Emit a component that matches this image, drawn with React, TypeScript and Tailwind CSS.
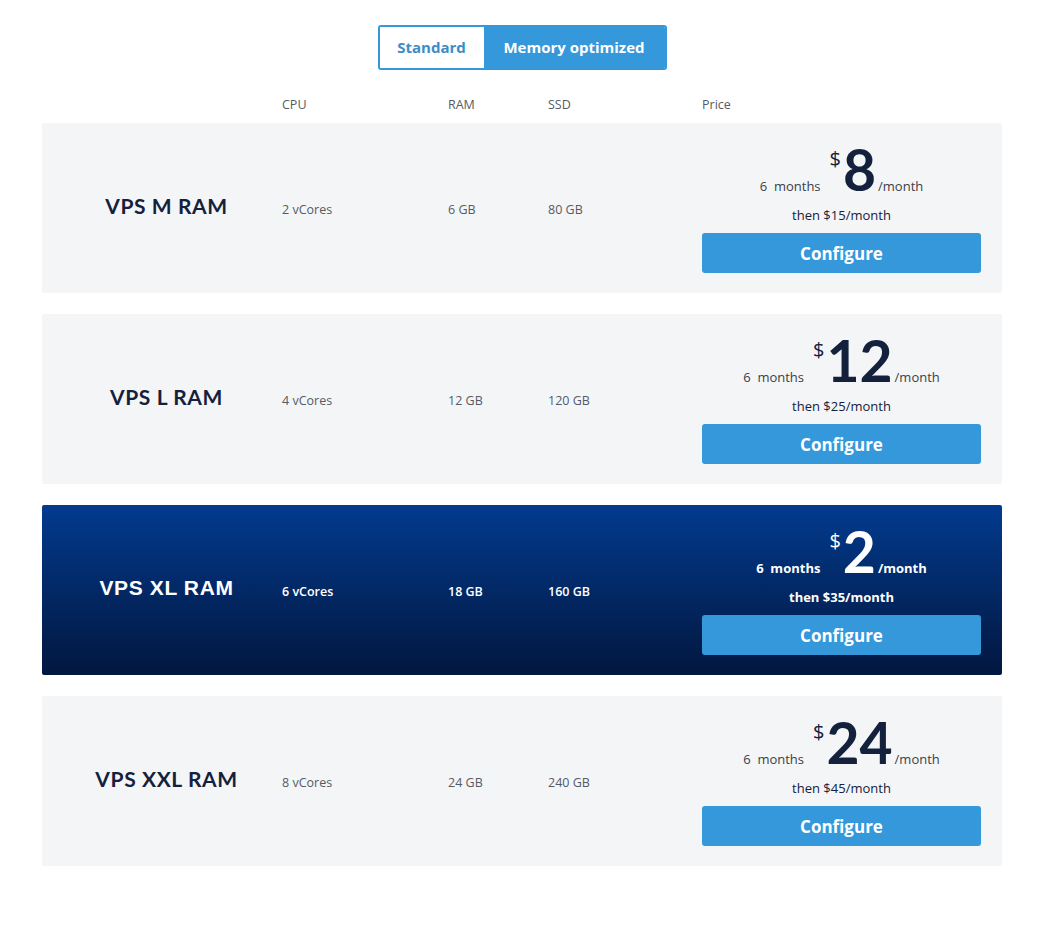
import React from "react";

type Plan = {
  name: string;
  cpu: string;
  ram: string;
  ssd: string;
  price: string;
  then: string;
  featured?: boolean;
};

const plans: Plan[] = [
  { name: "VPS M RAM", cpu: "2 vCores", ram: "6 GB", ssd: "80 GB", price: "8", then: "then $15/month" },
  { name: "VPS L RAM", cpu: "4 vCores", ram: "12 GB", ssd: "120 GB", price: "12", then: "then $25/month" },
  { name: "VPS XL RAM", cpu: "6 vCores", ram: "18 GB", ssd: "160 GB", price: "2", then: "then $35/month", featured: true },
  { name: "VPS XXL RAM", cpu: "8 vCores", ram: "24 GB", ssd: "240 GB", price: "24", then: "then $45/month" },
];

const body = { fontFamily: '"Open Sans", "Liberation Sans", sans-serif' };
const heading = { fontFamily: 'Lato, "Liberation Sans", sans-serif' };

function PlanRow({ plan }: { plan: Plan }) {
  const dark = plan.featured;
  return (
    <div
      className={`flex items-center h-[170px] rounded-[2px] ${
        dark ? "bg-gradient-to-b from-[#023b8f] to-[#02173f] text-white" : "bg-[#f4f5f7] text-[#555b66]"
      }`}
    >
      {/* name */}
      <div className="w-[240px] pl-[9px] text-center mb-[4px]">
        <h3
          style={dark ? { fontFamily: '"Liberation Sans", Arial, sans-serif' } : heading}
          className={`text-[21px] font-bold tracking-[0.6px] ${dark ? "text-white" : "text-[#14213d]"}`}
        >
          {plan.name}
        </h3>
      </div>

      <div style={body} className={`w-[166px] mt-[4px] text-[12.5px] ${dark ? "font-semibold" : ""}`}>{plan.cpu}</div>
      <div style={body} className={`w-[100px] mt-[4px] text-[12.5px] ${dark ? "font-semibold" : ""}`}>{plan.ram}</div>
      <div style={body} className={`w-[154px] mt-[4px] text-[12.5px] ${dark ? "font-semibold" : ""}`}>{plan.ssd}</div>

      {/* price */}
      <div className="w-[279px] flex flex-col items-center mb-[2px]">
        <div className="flex items-baseline">
          <span style={body} className={`text-[13px] ${dark ? "font-bold" : "text-[#3a3f48]"}`}>6&nbsp; months</span>
          <span style={body} className={`ml-[9px] text-[20px] relative -top-[25px] ${dark ? "text-white" : "text-[#14213d]"}`}>$</span>
          <span
            style={heading}
            className={`text-[57px] leading-none font-bold ml-[2px] ${dark ? "text-white" : "text-[#14213d]"}`}
          >
            {plan.price}
          </span>
          <span style={body} className={`text-[13px] ml-[2px] ${dark ? "font-bold" : "text-[#3a3f48]"}`}>/month</span>
        </div>
        <p style={body} className={`mt-[7px] text-[13px] ${dark ? "font-bold text-white" : "font-medium text-[#14213d]"}`}>
          {plan.then}
        </p>
        <button
          style={body}
          className="mt-[8px] w-[279px] h-[40px] rounded-[3px] bg-[#3498db] text-white text-[17px] font-bold"
        >
          Configure
        </button>
      </div>
    </div>
  );
}

export default function App() {
  return (
    <div className="min-h-[925px] bg-white">
      <div className="ml-[42px] w-[960px] pt-[25px]">
        <div className="flex justify-center">
          <div className="flex h-[45px] rounded-[3px] border-2 border-[#3498db] overflow-hidden" style={body}>
            <button className="w-[104px] bg-white text-[#3b8dc6] text-[15px] font-bold">Standard</button>
            <button className="w-[181px] bg-[#3498db] text-white text-[15px] font-bold">Memory optimized</button>
          </div>
        </div>

        <div style={body} className="flex mt-[22px] h-[26px] items-center text-[12.5px] text-[#555b66]">
          <div className="w-[240px]" />
          <div className="w-[166px]">CPU</div>
          <div className="w-[100px]">RAM</div>
          <div className="w-[154px]">SSD</div>
          <div>Price</div>
        </div>

        <div className="mt-[5px] flex flex-col gap-[21px]">
          {plans.map((p) => (
            <PlanRow key={p.name} plan={p} />
          ))}
        </div>
      </div>
    </div>
  );
}
